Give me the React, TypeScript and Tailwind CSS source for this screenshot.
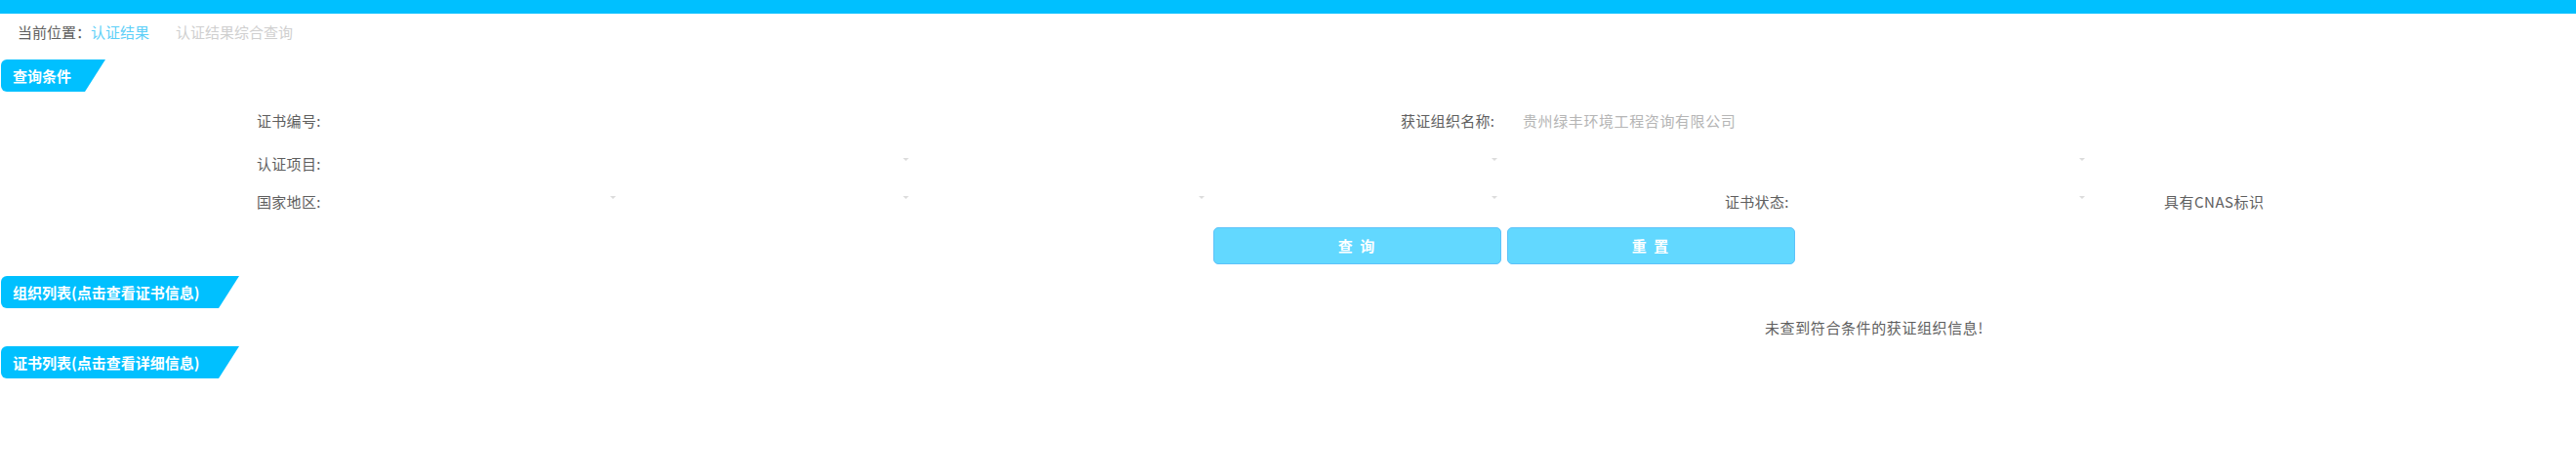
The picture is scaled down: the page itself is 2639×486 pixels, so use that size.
import React from "react";

const font = { fontFamily: '"Noto Sans CJK SC", "Noto Sans", sans-serif' };

function Arrow() {
  return (
    <svg width="6" height="3" viewBox="0 0 6 3" className="mb-[9px] mr-[2px]">
      <polygon points="0,0 6,0 3,3" fill="#dcdcdc" />
    </svg>
  );
}

function Select({ w }: { w: string }) {
  return (
    <div className={`${w} h-full flex items-center justify-end`}>
      <Arrow />
    </div>
  );
}

function SectionHeader({ title, w }: { title: string; w: string }) {
  return (
    <div
      className={`${w} ml-[1px] h-[33px] flex items-center pl-[12px] bg-[#00c0ff] rounded-l-[6px] text-white font-bold text-[15px] leading-[15px] [clip-path:polygon(0_0,100%_0,calc(100%_-_21px)_100%,0_100%)]`}
    >
      {title}
    </div>
  );
}

export default function App() {
  return (
    <div className="w-[2639px] h-[486px] bg-white text-[15px] text-[#5e5e5e]" style={font}>
      <div className="h-[14px] bg-[#00c0ff]" />
      <div className="h-[47px] pt-[11px] pl-[18px] leading-[15px] flex">
        <span className="text-[#5e5e5e]">当前位置：</span>
        <span className="text-[#5ccff8]">认证结果</span>
        <span className="ml-[27px] text-[#cfcfcf]">认证结果综合查询</span>
      </div>

      <SectionHeader title="查询条件" w="w-[107px]" />

      <div className="mt-[8px] h-[44px] flex items-center pl-[263px]">
        <div className="w-[70px] tracking-[0.3px]">证书编号:</div>
        <div className="ml-[1102px] w-[120px] tracking-[0.3px]">获证组织名称:</div>
        <div className="ml-[5px] text-[#b5b5b5] tracking-[0.6px]">贵州绿丰环境工程咨询有限公司</div>
      </div>

      <div className="h-[44px] flex items-center pl-[263px]">
        <div className="w-[70px] tracking-[0.3px]">认证项目:</div>
        <Select w="w-[600px]" />
        <Select w="w-[603px]" />
        <Select w="w-[602px]" />
      </div>

      <div className="h-[34px] flex items-center pl-[263px]">
        <div className="w-[70px] tracking-[0.3px]">国家地区:</div>
        <Select w="w-[300px]" />
        <Select w="w-[300px]" />
        <Select w="w-[303px]" />
        <Select w="w-[300px]" />
        <div className="ml-[231px] w-[69px] tracking-[0.3px]">证书状态:</div>
        <Select w="w-[302px]" />
        <div className="ml-[79px] tracking-[0.5px]">具有CNAS标识</div>
      </div>

      <div className="mt-[9px] h-[38px] flex gap-[6px] pl-[1243px]">
        <button className="w-[295px] h-[38px] rounded-[5px] bg-[#62d8ff] border border-[#5cc2fa] text-white font-bold text-[15px] tracking-[2px]">
          查 询
        </button>
        <button className="w-[295px] h-[38px] rounded-[5px] bg-[#62d8ff] border border-[#5cc2fa] text-white font-bold text-[15px] tracking-[2px]">
          重 置
        </button>
      </div>

      <div className="mt-[12px]">
        <SectionHeader title="组织列表(点击查看证书信息)" w="w-[244px]" />
      </div>
      <div className="h-[39px] flex items-center pl-[1808px] leading-[15px] tracking-[0.6px]">
        未查到符合条件的获证组织信息!
      </div>
      <SectionHeader title="证书列表(点击查看详细信息)" w="w-[244px]" />
    </div>
  );
}
